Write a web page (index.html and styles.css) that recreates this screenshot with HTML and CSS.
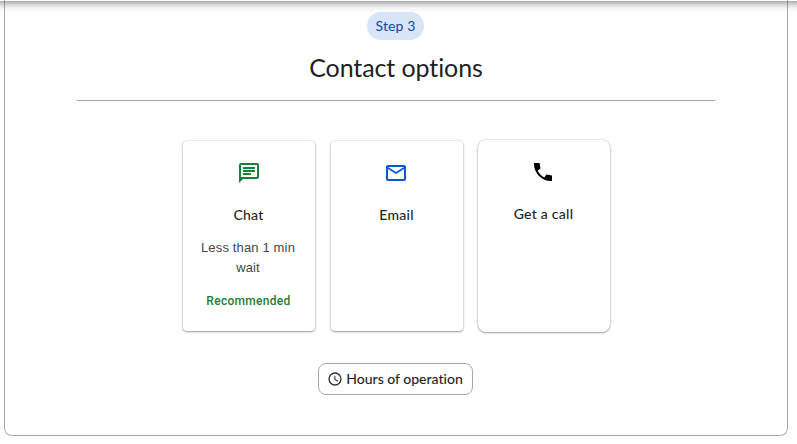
FILE: index.html
```html
<!DOCTYPE html>
<html lang="en">
<head>
    <meta charset="UTF-8">
    <title>Contact options</title>
    <link rel="stylesheet" href="styles.css">
</head>
<body>
<div class="top-shadow"></div>
<main class="panel">
    <header class="head">
        <span class="step">Step 3</span>
        <h1>Contact options</h1>
    </header>
    <div class="options">
        <a class="card chat">
            <svg width="24" height="24" viewBox="0 0 24 24"><path d="M20 2H4c-1.100 0-2 .9-2 2v18l4-4h14c1.100 0 2-.9 2-2V4c0-1.100-.9-2-2-2zm0 14H4V4h16v12zM6 12h8v2H6v-2zm0-3h12v2H6V9zm0-3h12v2H6V6z"/></svg>
            <h2>Chat</h2>
            <p class="wait">Less than 1 min wait</p>
            <p class="recommended">Recommended</p>
        </a>
        <a class="card email">
            <svg width="24" height="24" viewBox="0 0 24 24"><path d="M20 4H4c-1.100 0-2 .9-2 2v12c0 1.100.9 2 2 2h16c1.100 0 2-.9 2-2V6c0-1.100-.9-2-2-2zm0 14H4V8l8 5 8-5v10zm-8-7L4 6h16l-8 5z"/></svg>
            <h2>Email</h2>
        </a>
        <a class="card call">
            <svg width="24" height="24" viewBox="0 0 24 24"><path d="M3 3h5.500l1 5.500-2.900 2.300a15.300 15.300 0 0 0 6.600 6.600l2.300-2.900 5.500 1V21h-1C10.600 21 3 13.400 3 4V3z"/></svg>
            <h2>Get a call</h2>
        </a>
    </div>
    <button class="hours">
        <svg width="16" height="16" viewBox="0 0 24 24"><path d="M12 2a10 10 0 1 0 0 20 10 10 0 0 0 0-20zm0 18a8 8 0 1 1 0-16 8 8 0 0 1 0 16zm.6-13H11v6l4.800 3.200 1-1.400-4.200-2.600V7z"/></svg>
        <span>Hours of operation</span>
    </button>
</main>
</body>
</html>
```
FILE: styles.css
```css
html,body{
    margin: 0;
    height: 100%;
    background: #fff;
    overflow: hidden;
}
body{
    font-family: Lato, "Open Sans", sans-serif;
    font-variant-ligatures: none;
    color: #1f1f1f;
}
h1,h2,p{
    margin: 0;
}
/* shadow of the bar above the page */
.top-shadow{
    position: absolute;
    top: 1px;
    left: 0;
    right: 0;
    height: 12px;
    background: linear-gradient(rgba(60,68,64,.45), rgba(60,68,64,.24) 25%, rgba(60,68,64,.06) 60%, rgba(60,68,64,0));
}
.panel{
    width: 784px;
    height: 436px;
    margin-left: 4px;
    box-sizing: border-box;
    border: 1px solid #a8a9a9;
    border-top: 0;
    border-radius: 0 0 8px 8px;
    padding: 12px 72px 0;
    display: flex;
    flex-direction: column;
    align-items: center;
}
.head{
    width: 638px;
    height: 89px;
    box-sizing: border-box;
    border-bottom: 1px solid #a8a9a9;
    text-align: center;
}
.step{
    display: block;
    width: 57px;
    height: 28px;
    margin: 0 0 0 290px;
    border-radius: 14px;
    background: #d8e4f8;
    color: #0b4aa6;
    font-size: 14px;
    line-height: 28px;
    letter-spacing: .1px;
}
.head h1{
    margin-top: 9px;
    font-size: 25px;
    font-weight: 400;
    line-height: 36px;
    letter-spacing: -.1px;
}
.options{
    display: flex;
    align-items: center;
    gap: 15px;
    margin-top: 39px;
}
.card{
    width: 132px;
    height: 190px;
    box-sizing: border-box;
    padding: 20px 12px 0;
    border-radius: 4px;
    background: #fff;
    box-shadow: 0 1px 2px rgba(60,64,67,.45), 0 0 2px rgba(60,64,67,.3);
    text-align: center;
}
.card svg{
    display: block;
    margin: 0 auto 20px;
}
.card h2{
    font-size: 14px;
    font-weight: 500;
    line-height: 20px;
    letter-spacing: .25px;
}
.chat{
    margin-right: 1px;
}
.chat svg{
    fill: #188038;
}
.email svg,.call svg{
    margin-left: 41px;
}
.email svg{
    fill: #0b57d0;
}
.call{
    height: 192px;
    border-radius: 8px;
}
.wait{
    margin-top: 13px;
    padding-right: 1px;
    color: #444746;
    font: 13px/20px "Liberation Sans", Arial, sans-serif;
    letter-spacing: .15px;
}
.recommended{
    margin-top: 13px;
    color: #188038;
    font: 500 12px/20px Roboto, sans-serif;
    letter-spacing: .3px;
}
.hours{
    width: 155px;
    height: 32px;
    margin: 31px 2px 0 0;
    padding: 0;
    display: flex;
    align-items: center;
    justify-content: center;
    gap: 3px;
    border: 1px solid #a8a9a9;
    border-radius: 8px;
    background: #fff;
    color: #1f1f1f;
    font: 500 14px/20px Lato, sans-serif;
    font-variant-ligatures: none;
    white-space: nowrap;
}
.hours svg{
    fill: #303030;
    flex: none;
}
```
